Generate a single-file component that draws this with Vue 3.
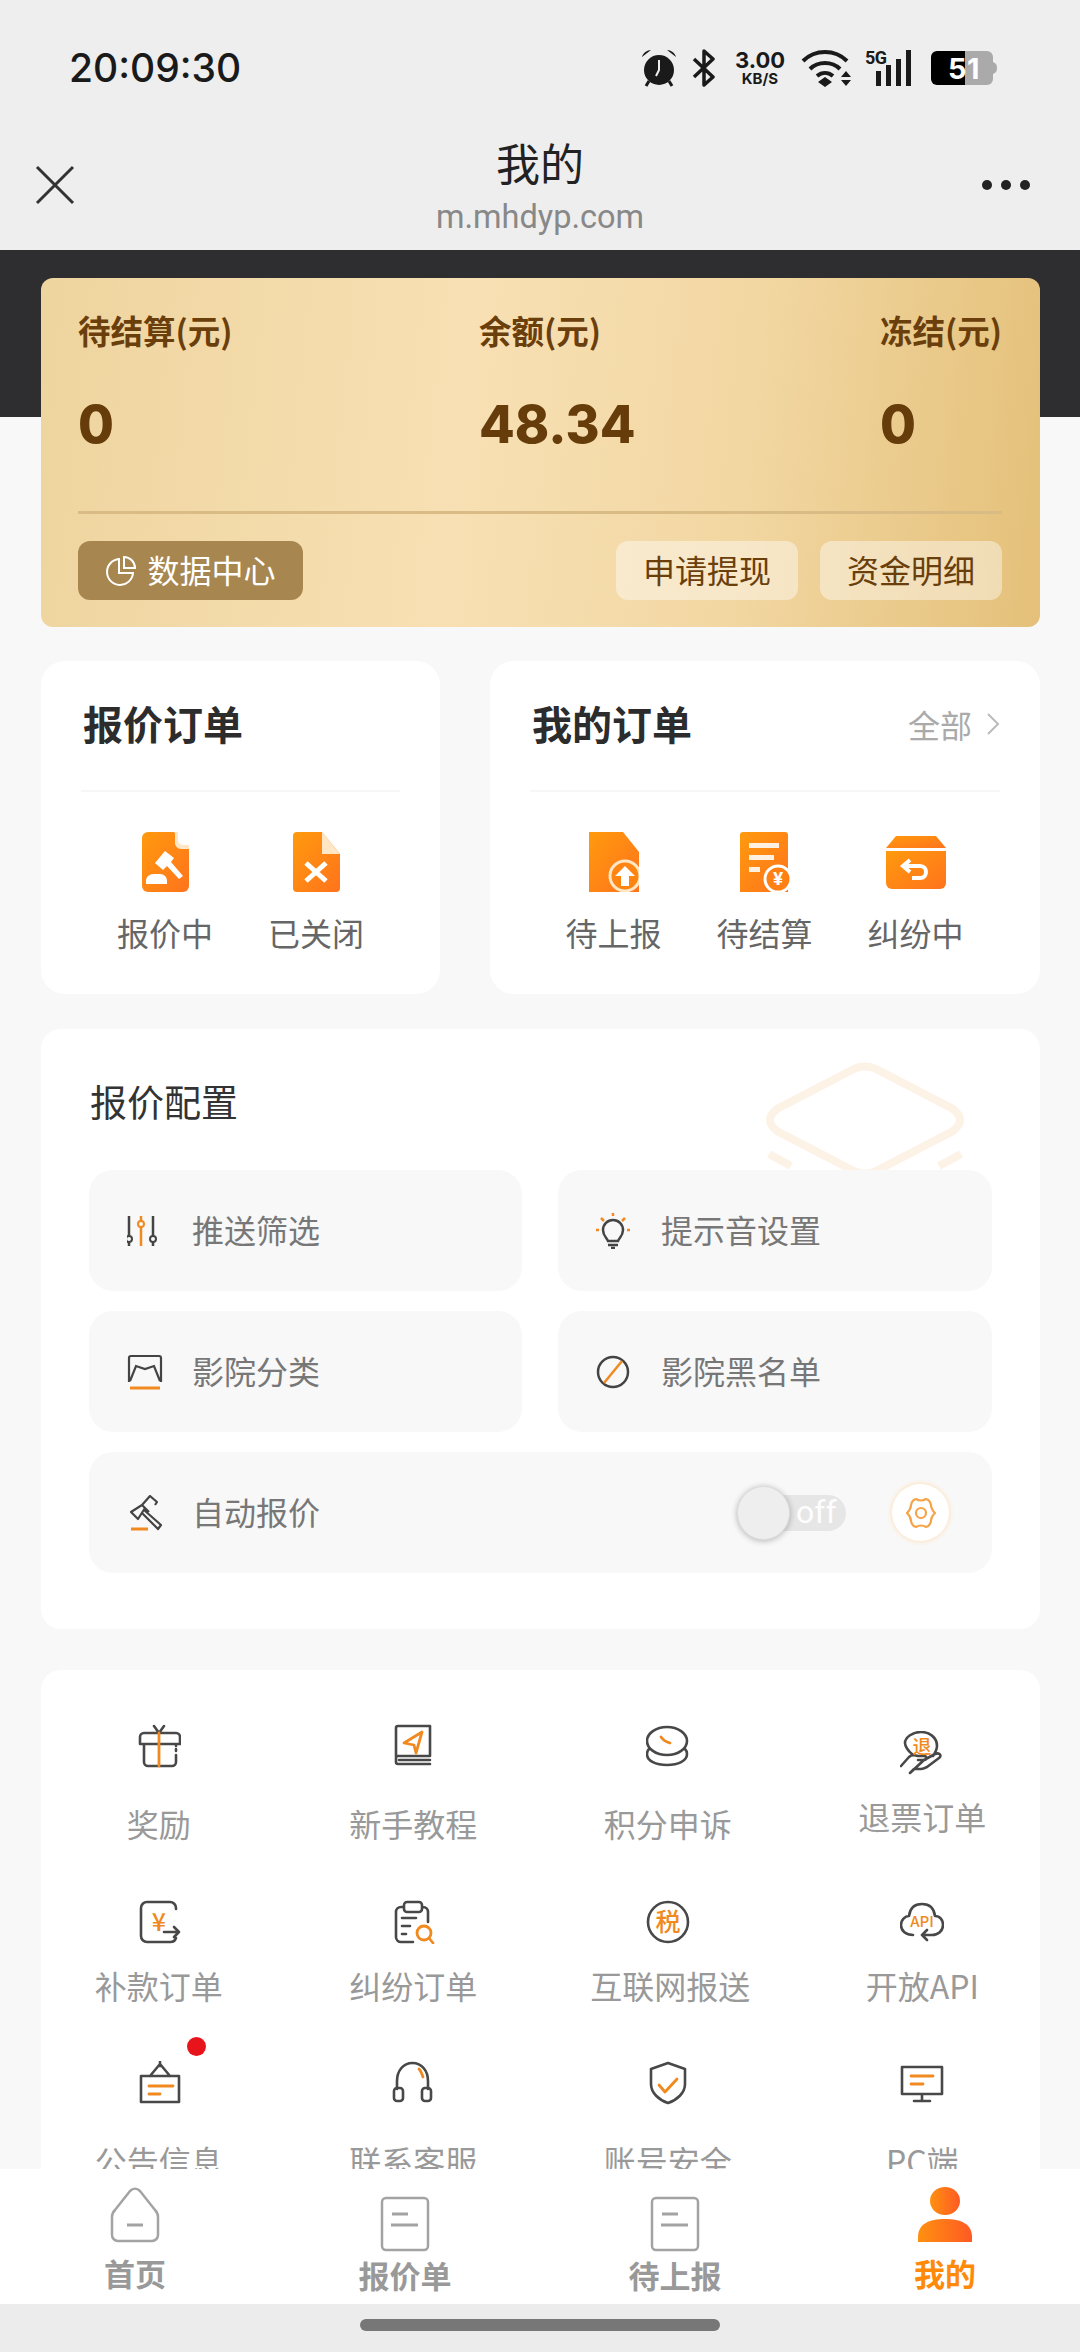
<script setup>
const tools = [
  { label: '奖励', cls: '', dark: 'M3 13a4 4 0 0 1 4-4h32a4 4 0 0 1 4 4v7H3zM7 20v18a4 4 0 0 0 4 4h24a4 4 0 0 0 4-4v-7M39 27v-2M39 22v-2M22 9l-5-7M22 9l5-7', accent: 'M22 9v33' },
  { label: '新手教程', cls: '', dark: 'M5 33V4a2 2 0 0 1 2-2h32v30H7a2 2 0 0 0-2 2v4a2 2 0 0 0 2 2h32M8 36h31', accent: 'M31 8 13 19l10 2 2 8z' },
  { label: '积分申诉', cls: '', dark: 'M1 17a20 14 0 1 1 40 0a20 14 0 1 1-40 0M3 25c-1 1-2 3-2 5 0 7 9 11 20 11s20-4 20-11c0-2-1-4-2-5', accent: 'M15 13c2 3 5 5 9 6' },
  { label: '退票订单', cls: 'refund', dark: 'M12 23C8 20 5 15 5 12 5 6 13 1 21 1s16 5 16 14c0 4-2 7-4 10M1 35l8-9c3-3 6-2 9-1h6c3 0 3 4 0 4h-6M24 29l11-6c5-2 7 2 4 4l-12 9c-2 1-4 2-6 2h-7l-4 4z', accent: '', mark: '退', x: 22, y: 23, size: 19 },
  { label: '补款订单', cls: 'tight', dark: 'M39 9V8a6 6 0 0 0-6-6H10a6 6 0 0 0-6 6v28a6 6 0 0 0 6 6h23a6 6 0 0 0 6-4M27 32h15m-5-5 5 5-5 5', accent: '', mark: '¥', x: 22, y: 31, size: 25 },
  { label: '纠纷订单', cls: 'tight', dark: 'M13 7H10a5 5 0 0 0-5 5v25a5 5 0 0 0 5 5h12M31 7h1a5 5 0 0 1 5 5v10M13 5a3 3 0 0 1 3-3h12a3 3 0 0 1 3 3v4a3 3 0 0 1-3 3H16a3 3 0 0 1-3-3zM11 18h14M11 26h8M11 34h4', accent: 'M26 33a7 7 0 1 0 14 0a7 7 0 1 0-14 0M38 38l4 5' },
  { label: '互联网报送', cls: 'tight shift', dark: 'M2 22a20 20 0 1 0 40 0a20 20 0 1 0-40 0', accent: '', mark: '税', x: 22, y: 31, size: 25 },
  { label: '开放API', cls: 'tight', dark: 'M13 35C6 35 1 31 1 25c0-5 4-9 8-9 1-8 6-12 13-12s12 4 13 12c5 0 8 4 8 9 0 6-5 10-11 10H22m5-5-5 5 5 5', accent: '', mark: 'API', x: 22, y: 27, size: 15 },
  { label: '公告信息', cls: '', dot: true, dark: 'M4 15h38v26H4zM23 3 13 15M23 3l10 12M23 1v4', accent: 'M12 25h24M12 33h11' },
  { label: '联系客服', cls: '', dark: 'M6 28V20C6 10 12 2 21.5 2S37 10 37 20v8M3 30a3 3 0 0 1 3-3h3a3 3 0 0 1 3 3v7a3 3 0 0 1-3 3H6a3 3 0 0 1-3-3zM31 30a3 3 0 0 1 3-3h3a3 3 0 0 1 3 3v7a3 3 0 0 1-3 3h-3a3 3 0 0 1-3-3z', accent: 'M28 8c2 2 3 5 4 8' },
  { label: '账号安全', cls: '', dark: 'M22 2l17 6v15c0 9-8 16-17 19C13 39 5 32 5 23V8z', accent: 'M13 24l6 7 12-13' },
  { label: 'PC端', cls: '', dark: 'M2 6h40v27H2zM22 33v6M14 40h16', accent: 'M11 15h22M11 23h12' }
];
</script>

<template>
  <div class="page">
    <svg class="defs" width="0" height="0">
      <defs>
        <linearGradient id="og" x1="0" y1="0" x2="1" y2="1">
          <stop offset="0" stop-color="#ff9a0e" />
          <stop offset="1" stop-color="#ff731c" />
        </linearGradient>
        <linearGradient id="me" x1="0" y1="0" x2="1" y2="0">
          <stop offset="0" stop-color="#ff9010" />
          <stop offset="1" stop-color="#ff5a24" />
        </linearGradient>
      </defs>
    </svg>

    <header class="top">
      <div class="status">
        <span class="time">20:09:30</span>
        <div class="status-right">
          <svg width="36" height="38" viewBox="0 0 36 38">
            <circle cx="18" cy="21" r="15" fill="#1a1a1a" />
            <path d="M18 11v10l-3 6" fill="none" stroke="#eee" stroke-width="2" />
            <path d="M1 8c1-4 5-7 9-7zM35 8c-1-4-5-7-9-7z" fill="#1a1a1a" />
            <path d="M8 32l-3 5M28 32l3 5" stroke="#1a1a1a" stroke-width="3" />
          </svg>
          <svg width="30" height="38" viewBox="0 0 30 38">
            <path d="M5 10l19 18-9 8V2l9 8L5 28" fill="none" stroke="#1a1a1a" stroke-width="3.5" stroke-linejoin="round" />
          </svg>
          <div class="speed"><b>3.00</b><i>KB/S</i></div>
          <svg width="52" height="38" viewBox="0 0 52 38">
            <path d="M2 12c12-12 32-12 44 0M9 20c8-8 22-8 30 0M16 27c5-4 11-4 16 0" fill="none" stroke="#1a1a1a" stroke-width="4" />
            <path d="M24 28l7 5-7 5-7-5zM45 22l5 6H40zM40 31h10l-5 6z" fill="#1a1a1a" />
          </svg>
          <div class="signal">
            <span class="five-g">5G</span>
            <svg width="38" height="37" viewBox="0 0 38 37">
              <path d="M1 21h5v15H1zM11 15h5v21h-5zM21 9h5v27h-5zM31 0h5v36h-5z" fill="#1a1a1a" />
            </svg>
          </div>
          <svg width="72" height="36" viewBox="0 0 72 36">
            <path d="M40 1h22a6 6 0 0 1 6 6v22a6 6 0 0 1-6 6H40z" fill="#aaa" />
            <path d="M68 12c3 1 4 3 4 6s-1 5-4 6z" fill="#aaa" />
            <path d="M12 1h28v34H12a6 6 0 0 1-6-6V7a6 6 0 0 1 6-6z" fill="#000" />
            <text x="23" y="29" class="batt">5</text>
            <text x="42" y="29" class="batt">1</text>
          </svg>
        </div>
      </div>
      <nav class="nav">
        <svg class="close" width="40" height="40" viewBox="0 0 40 40">
          <path d="M2 2l36 36M38 2 2 38" fill="none" stroke="#333" stroke-width="3" />
        </svg>
        <div class="nav-title">
          <div class="title">我的</div>
          <div class="url">m.mhdyp.com</div>
        </div>
        <div class="dots"><i></i><i></i><i></i></div>
      </nav>
    </header>

    <section class="hero">
      <div class="gold">
        <div class="stats">
          <div v-for="s in [['待结算(元)', '0'], ['余额(元)', '48.34'], ['冻结(元)', '0']]" :key="s[0]" class="stat">
            <div class="stat-label">{{ s[0] }}</div>
            <div class="stat-value">{{ s[1] }}</div>
          </div>
        </div>
        <div class="gold-line"></div>
        <div class="gold-actions">
          <button class="data-btn">
            <svg width="32" height="32" viewBox="0 0 32 32">
              <path d="M14 4a13 13 0 1 0 14 14H14zM19 2v11h11A11 11 0 0 0 19 2z" fill="none" stroke="#fff" stroke-width="2" />
            </svg>
            <span>数据中心</span>
          </button>
          <div class="spacer"></div>
          <button class="gold-btn">申请提现</button>
          <button class="gold-btn">资金明细</button>
        </div>
      </div>
    </section>

    <section class="orders">
      <div class="order-card left">
        <div class="order-head"><h3>报价订单</h3></div>
        <div class="order-items">
          <div class="order-item">
            <svg width="47" height="60" viewBox="0 0 47 60">
              <path d="M6 0h26l15 17v37a6 6 0 0 1-6 6H6a6 6 0 0 1-6-6V6a6 6 0 0 1 6-6z" fill="url(#og)" />
              <path d="M33 0v10a6 6 0 0 0 6 6h8V0z" fill="#fff" />
              <path d="M36 0v8a5 5 0 0 0 5 5h6v4h-8a6 6 0 0 1-6-6V0z" fill="#ffe6c4" />
              <path d="M23 19l9 7-3 4 12 14-4 3-12-13-4 4-8-7z" fill="#fff" />
              <path d="M4 52v-3c0-4 3-7 8-7h6c4 0 7 3 7 7v3z" fill="#fff" />
            </svg>
            <span>报价中</span>
          </div>
          <div class="order-item">
            <svg width="47" height="60" viewBox="0 0 47 60">
              <path d="M4 0h25l18 22v34a4 4 0 0 1-4 4H4a4 4 0 0 1-4-4V4a4 4 0 0 1 4-4z" fill="url(#og)" />
              <path d="M29 0l18 22H29z" fill="#ffe6c4" />
              <path d="M13 31l20 18M33 31 13 49" stroke="#fff" stroke-width="5" />
            </svg>
            <span>已关闭</span>
          </div>
        </div>
      </div>

      <div class="order-card right">
        <div class="order-head">
          <h3>我的订单</h3>
          <div class="more">
            全部
            <svg width="14" height="28" viewBox="0 0 14 28">
              <path d="M2 4l10 10L2 24" fill="none" stroke="#bbb" stroke-width="2" />
            </svg>
          </div>
        </div>
        <div class="order-items">
          <div class="order-item">
            <svg width="50" height="60" viewBox="0 0 50 60">
              <path d="M0 0h34l16 20v40H0z" fill="url(#og)" />
              <circle cx="36" cy="44" r="15" fill="#ff8513" stroke="#ffe6c4" stroke-width="3" />
              <path d="M36 34l10 10h-6v10h-8V44h-6z" fill="#fff" />
            </svg>
            <span>待上报</span>
          </div>
          <div class="order-item">
            <svg width="50" height="60" viewBox="0 0 50 60">
              <path d="M3 0h42a3 3 0 0 1 3 3v57H0V3a3 3 0 0 1 3-3z" fill="url(#og)" />
              <path d="M9 11h30v5H9zM9 23h25v5H9zM9 35h11v5H9z" fill="#fff" fill-opacity=".88" />
              <circle cx="38" cy="47" r="13" fill="#ff8015" stroke="#fff" stroke-width="3" />
              <text x="38" y="53" class="yen">¥</text>
            </svg>
            <span>待结算</span>
          </div>
          <div class="order-item">
            <svg width="60" height="60" viewBox="0 0 60 60">
              <path d="M10 4h40l10 12H0z" fill="url(#og)" />
              <path d="M0 19h60v32a6 6 0 0 1-6 6H6a6 6 0 0 1-6-6z" fill="url(#og)" />
              <path d="M24 28l-7 6 7 6M17 34h17c8 0 8 12 0 12h-8" fill="none" stroke="#fff" stroke-width="4" />
            </svg>
            <span>纠纷中</span>
          </div>
        </div>
      </div>
    </section>

    <section class="config">
      <svg class="watermark" width="204" height="120" viewBox="0 0 204 120">
        <path d="M87 9Q102 0 117 9L190 47Q204 58 190 69L117 107Q102 116 87 107L14 69Q0 58 14 47Z" fill="none" stroke="#fdf2e6" stroke-width="8" />
        <path d="M6 92l22 12M198 92l-22 12" fill="none" stroke="#fdf2e6" stroke-width="8" />
      </svg>
      <h4>报价配置</h4>
      <div class="config-grid">
        <div class="config-row">
          <svg width="36" height="36" viewBox="0 0 36 36">
            <path d="M2 3v30M26 3v30" stroke="#444" stroke-width="2.5" />
            <circle cx="2" cy="26" r="3" fill="#f8f8f8" stroke="#444" stroke-width="2" />
            <circle cx="26" cy="26" r="3" fill="#f8f8f8" stroke="#444" stroke-width="2" />
            <path d="M14 3v30" stroke="#f08a20" stroke-width="2.5" />
            <circle cx="14" cy="11" r="3" fill="#f8f8f8" stroke="#f08a20" stroke-width="2" />
          </svg>
          <span>推送筛选</span>
        </div>
        <div class="config-row">
          <svg width="36" height="36" viewBox="0 0 36 36">
            <path d="M12 28c-1-3-5-5-5-11a10 10 0 0 1 20 0c0 6-4 8-5 11z" fill="none" stroke="#444" stroke-width="2.5" />
            <path d="M12 32h10M15 35h4" stroke="#444" stroke-width="2.5" />
            <path d="M17 0v3M5 5l3 3M29 5l-3 3M0 17h3M31 17h3" stroke="#f08a20" stroke-width="2.5" />
          </svg>
          <span>提示音设置</span>
        </div>
        <div class="config-row">
          <svg width="36" height="36" viewBox="0 0 36 36">
            <path d="M2 28V4a2 2 0 0 1 2-2h28a2 2 0 0 1 2 2v24M3 27l6-15 9 3 9-3 6 15" fill="none" stroke="#444" stroke-width="2.2" />
            <path d="M3 34h30" stroke="#f08a20" stroke-width="3" />
          </svg>
          <span>影院分类</span>
        </div>
        <div class="config-row">
          <svg width="36" height="36" viewBox="0 0 36 36">
            <circle cx="17" cy="18" r="15" fill="none" stroke="#444" stroke-width="2.5" />
            <path d="M8 29 26 7" stroke="#f08a20" stroke-width="2.5" />
          </svg>
          <span>影院黑名单</span>
        </div>
        <div class="config-row wide">
          <svg width="36" height="36" viewBox="0 0 36 36">
            <path d="M15 10l8-9 7 6-2 3M15 10 4 17l7 7 7-11M15 10l7 7M17 15l17 15-3 4-16-16" fill="none" stroke="#444" stroke-width="2.2" stroke-linejoin="round" />
            <path d="M4 34h17" stroke="#f08a20" stroke-width="3" />
          </svg>
          <span>自动报价</span>
          <div class="toggle"><i class="knob"></i><em>off</em></div>
          <div class="gear">
            <svg width="30" height="32" viewBox="0 0 30 32">
              <path d="M10 2Q15 5 20 2Q24 3 25 8Q25 12 29 16Q25 20 25 24Q24 29 20 30Q15 27 10 30Q6 29 5 24Q5 20 1 16Q5 12 5 8Q6 3 10 2Z" fill="none" stroke="#f4a347" stroke-width="2.2" stroke-linejoin="round" />
              <circle cx="15" cy="16" r="5" fill="none" stroke="#f4a347" stroke-width="2.2" />
            </svg>
          </div>
        </div>
      </div>
    </section>

    <section class="tools">
      <div v-for="t in tools" :key="t.label" class="tool" :class="t.cls">
        <div class="tool-icon">
          <svg width="44" height="44" viewBox="0 0 44 44">
            <path :d="t.dark" class="ink" />
            <path v-if="t.accent" :d="t.accent" class="accent" />
            <text v-if="t.mark" :x="t.x" :y="t.y" :font-size="t.size" class="mark">{{ t.mark }}</text>
          </svg>
          <i v-if="t.dot" class="dot"></i>
        </div>
        <span>{{ t.label }}</span>
      </div>
    </section>

    <footer class="tabbar">
      <div class="tab first">
        <svg width="50" height="56" viewBox="0 0 50 56">
          <path d="M20 4c3-3 7-3 10 0l15 19c2 2 3 4 3 7v18a6 6 0 0 1-6 6H8a6 6 0 0 1-6-6V30c0-3 1-5 3-7z" fill="none" stroke="#a3a3a3" stroke-width="2.5" />
          <path d="M17 38h16" stroke="#a3a3a3" stroke-width="3" />
        </svg>
        <span>首页</span>
      </div>
      <div class="tab">
        <svg width="50" height="56" viewBox="0 0 50 56">
          <rect x="2" y="2" width="46" height="52" rx="4" fill="none" stroke="#a3a3a3" stroke-width="2.5" />
          <path d="M12 18h16M11 29h27" stroke="#a3a3a3" stroke-width="3" />
        </svg>
        <span>报价单</span>
      </div>
      <div class="tab">
        <svg width="50" height="56" viewBox="0 0 50 56">
          <rect x="2" y="2" width="46" height="52" rx="4" fill="none" stroke="#a3a3a3" stroke-width="2.5" />
          <path d="M12 18h16M11 29h27" stroke="#a3a3a3" stroke-width="3" />
        </svg>
        <span>待上报</span>
      </div>
      <div class="tab active">
        <svg width="54" height="56" viewBox="0 0 54 56">
          <ellipse cx="27" cy="14" rx="15" ry="14" fill="url(#me)" />
          <path d="M0 50c0-13 11-18 27-18s27 5 27 18v5H0z" fill="url(#me)" />
        </svg>
        <span>我的</span>
      </div>
    </footer>
    <div class="home-bar"><i></i></div>
  </div>
</template>

<style>
html, body { margin: 0; background: #f8f8f8; }
</style>

<style scoped>
.page {
  position: relative;
  width: 1080px;
  height: 2352px;
  overflow: hidden;
  background: #f8f8f8;
  font-family: "Noto Sans CJK SC", "Roboto", sans-serif;
}
.defs { position: absolute; }

.top { background: #eee; height: 250px; }
.status {
  height: 120px;
  box-sizing: border-box;
  padding: 48px 83px 0 69px;
  display: flex;
  justify-content: space-between;
  align-items: flex-start;
}
.time { font: 500 39px/40px "Inter", sans-serif; color: #1a1a1a; }
.status-right { display: flex; align-items: center; gap: 12px; height: 40px; }
.speed { width: 58px; height: 38px; display: flex; flex-direction: column; align-items: center; color: #1a1a1a; font-family: "Inter", sans-serif; }
.speed b { display: block; height: 22px; font-size: 22px; line-height: 22px; font-weight: 700; }
.speed i { display: block; height: 16px; font-size: 15px; line-height: 16px; font-weight: 700; font-style: normal; }
.signal { position: relative; width: 48px; height: 37px; display: flex; justify-content: flex-end; }
.five-g { position: absolute; left: 0; top: -1px; font: 700 18px/18px "Roboto", sans-serif; color: #1a1a1a; letter-spacing: -.5px; }
.batt { font: 700 29px "Inter", sans-serif; fill: #fff; }

.nav {
  height: 130px;
  padding: 0 35px;
  display: grid;
  grid-template-columns: 1fr auto 1fr;
  align-items: center;
}
.nav-title { text-align: center; }
.title { font-size: 44px; line-height: 56px; color: #222; }
.url { font: 400 32.5px/40px "Roboto", sans-serif; color: #888; margin-top: 7px; }
.dots { justify-self: end; margin-right: 15px; display: flex; gap: 9px; }
.dots i { width: 10px; height: 10px; border-radius: 50%; background: #222; }

.hero {
  padding: 28px 40px 34px 41px;
  background: linear-gradient(#2e2e30 167px, transparent 167px);
}
.gold {
  height: 349px;
  box-sizing: border-box;
  padding: 30px 38px 0 37px;
  border-radius: 12px;
  background: linear-gradient(96deg, #eed49e 0%, #f8e0b4 42%, #f2d7a2 70%, #e4c079 100%);
}
.stats { display: grid; grid-template-columns: 401px 401px 120px; }
.stat-label { font-size: 32.5px; line-height: 44px; font-weight: 700; color: #6a3f0c; white-space: nowrap; }
.stat-value { margin-top: 43px; font: 800 52px/60px "Inter", sans-serif; color: #653c0a; }
.gold-line { margin-top: 56px; height: 3px; background: #d8bb85; }
.gold-actions { margin-top: 27px; display: flex; gap: 22px; }
.spacer { flex: 1; }
.gold-actions button {
  height: 59px;
  border: 0;
  border-radius: 12px;
  font-family: inherit;
  font-size: 32px;
  padding: 0 0 4px;
}
.data-btn {
  width: 225px;
  background: #a8864f;
  color: #fff;
  display: flex;
  align-items: center;
  justify-content: center;
  gap: 10px;
}
.data-btn svg { margin-top: 4px; }
.gold-btn { width: 182px; background: rgba(255, 255, 255, .42); color: #6a3f0c; }

.orders { padding: 0 40px 0 41px; display: flex; gap: 50px; }
.order-card {
  height: 333px;
  box-sizing: border-box;
  padding: 38px 40px 0 40px;
  background: #fff;
  border-radius: 24px;
}
.left { width: 399px; }
.right { width: 550px; }
.order-head {
  height: 93px;
  box-sizing: border-box;
  border-bottom: 2px solid #f7f7f7;
  display: flex;
  justify-content: space-between;
  padding-left: 2px;
}
.order-head h3 { margin: -1px 0 0; font-size: 40px; line-height: 50px; font-weight: 700; color: #2c2c2c; }
.more { display: flex; align-items: center; gap: 14px; height: 50px; font-size: 32px; color: #aaa; }
.order-items { margin-top: 40px; display: flex; justify-content: center; }
.order-item { width: 151px; display: flex; flex-direction: column; align-items: center; gap: 18px; }
.order-item span { font-size: 32px; line-height: 44px; color: #666; }
.right .order-items { margin-left: -1px; }
.yen { font: 700 19px "Roboto", sans-serif; fill: #fff; text-anchor: middle; }

.config {
  position: relative;
  margin: 35px 40px 0 41px;
  height: 600px;
  box-sizing: border-box;
  padding: 50px 48px 0;
  background: #fff;
  border-radius: 20px;
  overflow: hidden;
}
.watermark { position: absolute; top: 33px; right: 73px; }
.config h4 { margin: 0 0 47px 1px; font-size: 37px; line-height: 44px; font-weight: 400; color: #333; }
.config-grid { position: relative; display: grid; grid-template-columns: 433px 434px; column-gap: 36px; row-gap: 20px; }
.config-row {
  height: 121px;
  box-sizing: border-box;
  padding-left: 38px;
  display: flex;
  align-items: center;
  gap: 29px;
  background: #f8f8f8;
  border-radius: 24px;
}
.config-row span { font-size: 32px; color: #777; padding-bottom: 3px; }
.wide { grid-column: 1 / 3; padding-right: 43px; }
.toggle {
  position: relative;
  margin-left: auto;
  width: 107px;
  height: 36px;
  background: #e6e6e6;
  border-radius: 18px;
}
.toggle em { position: absolute; left: 57px; top: -2px; font: 400 32px/38px "Roboto", sans-serif; color: #fdfdfd; }
.knob {
  position: absolute;
  left: -2px;
  top: -9px;
  width: 53px;
  height: 54px;
  border-radius: 50%;
  background: #eee;
  border: 1px solid #ddd;
  box-sizing: border-box;
  box-shadow: 0 1px 6px rgba(0, 0, 0, .28);
}
.gear {
  margin-left: 17px;
  width: 57px;
  height: 57px;
  border-radius: 50%;
  background: #fff;
  box-shadow: 0 0 4px 1px #fde3c0;
  display: flex;
  align-items: center;
  justify-content: center;
}

.tools {
  margin: 41px 40px 0 41px;
  height: 700px;
  box-sizing: border-box;
  padding-top: 54px;
  background: #fff;
  border-radius: 20px;
  display: grid;
  grid-template-columns: repeat(4, 254.5px);
  grid-auto-rows: max-content;
  justify-content: center;
  row-gap: 52px;
}
.tool { display: flex; flex-direction: column; align-items: center; gap: 35px; }
.tool.tight { gap: 22px; }
.tool.refund { gap: 28px; }
.tool span { height: 44px; font-size: 32px; line-height: 41px; color: #999; white-space: nowrap; }
.tool.tight .tool-icon { top: 1px; }
.tool.shift span { padding-left: 5px; }
.tool-icon { position: relative; width: 44px; height: 44px; }
.tool-icon svg { display: block; }
.tool.refund .tool-icon { top: 7px; }
.ink { fill: none; stroke: #484848; stroke-width: 2.6; stroke-linejoin: round; stroke-linecap: round; }
.accent { fill: none; stroke: #f08a20; stroke-width: 2.8; stroke-linejoin: round; stroke-linecap: round; }
.mark { fill: #f08a20; text-anchor: middle; font-family: "Noto Sans CJK SC", "Roboto", sans-serif; font-weight: 500; }
.dot {
  position: absolute;
  left: 50px;
  top: -24px;
  width: 19px;
  height: 19px;
  border-radius: 50%;
  background: #e8141c;
}

.tabbar {
  position: absolute;
  left: 0;
  right: 0;
  top: 2169px;
  height: 135px;
  background: #fff;
  display: grid;
  grid-template-columns: repeat(4, 270px);
}
.tab { display: flex; flex-direction: column; align-items: center; padding-top: 27px; }
.tab span { font-size: 31px; line-height: 44px; font-weight: 700; color: #999; margin-top: 1px; }
.tab.first, .tab.active { padding-top: 18px; }
.tab.first span, .tab.active span { margin-top: 8px; }
.tab.active span { color: #ff8a0a; }
.home-bar {
  position: absolute;
  left: 0;
  right: 0;
  top: 2304px;
  height: 48px;
  background: #ececec;
}
.home-bar i {
  position: absolute;
  left: 360px;
  top: 15px;
  width: 360px;
  height: 12px;
  border-radius: 6px;
  background: #777;
}
</style>
